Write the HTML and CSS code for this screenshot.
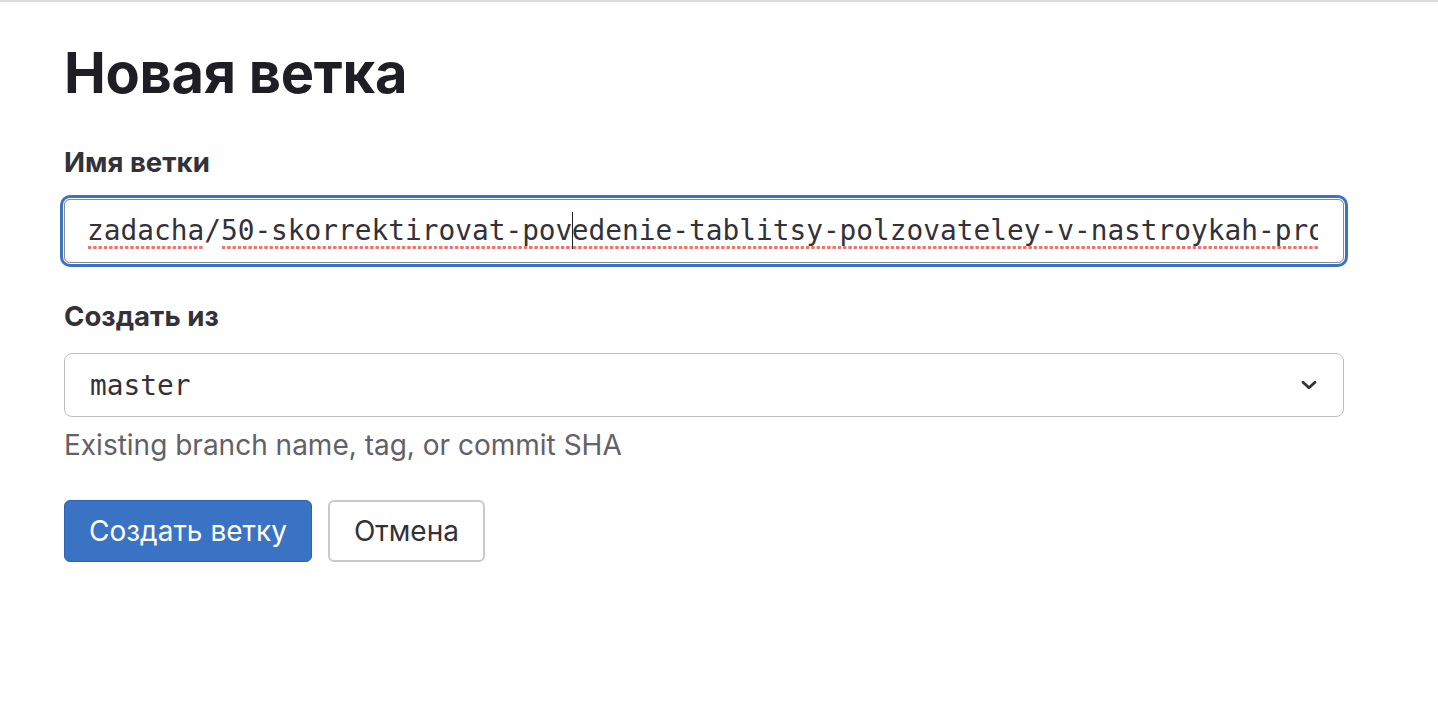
FILE: index.html
```html
<!DOCTYPE html>
<html lang="ru">
<head>
<meta charset="utf-8">
<title>Новая ветка</title>
<link rel="stylesheet" href="styles.css">
</head>
<body>
<div class="topline"></div>
<main class="page">
  <h1 class="title">Новая ветка</h1>
  <form class="form">
    <div class="group">
      <label class="label">Имя ветки</label>
      <div class="field field-focus">
        <div class="field-inner mono"><span class="sp">zadacha</span>/<span class="sp">50-skorrektirovat-pov</span><span class="caret"></span><span class="sp">edenie-tablitsy-polzovateley-v-nastroykah-proekta</span></div>
      </div>
    </div>
    <div class="group group-second">
      <label class="label">Создать из</label>
      <div class="select">
        <span class="mono">master</span>
        <svg class="chev" width="18" height="12" viewBox="0 0 18 12"><path d="M3 3.2 L9 8.8 L15 3.2" fill="none" stroke="#333238" stroke-width="2.8" stroke-linecap="round" stroke-linejoin="round"/></svg>
      </div>
      <p class="help">Existing branch name, tag, or commit SHA</p>
    </div>
    <div class="actions">
      <button type="button" class="btn btn-primary">Создать ветку</button>
      <button type="button" class="btn btn-default">Отмена</button>
    </div>
  </form>
</main>
</body>
</html>
```

FILE: styles.css
```css
html, body {
  margin: 0;
  padding: 0;
  background: #ffffff;
}
body {
  font-family: "Inter", "Noto Sans", sans-serif;
  color: #333238;
}
.topline {
  height: 2px;
  background: #dcdcde;
}
.page {
  padding: 37px 94px 0 64px;
}
.title {
  margin: 0;
  font-size: 56px;
  line-height: 68px;
  font-weight: 700;
  color: #1f1e24;
  letter-spacing: -0.3px;
}
.form {
  display: flex;
  flex-direction: column;
  margin-top: 38px;
}
.group {
  display: flex;
  flex-direction: column;
}
.group-second {
  margin-top: 36px;
}
.label {
  font-size: 27.6px;
  line-height: 34px;
  font-weight: 700;
  color: #333238;
  margin-bottom: 20px;
}
.mono {
  font-family: "DejaVu Sans Mono", "Liberation Mono", monospace;
  font-size: 27.8px;
  color: #333238;
}
.field {
  height: 64px;
  box-sizing: border-box;
  border: 1px solid #89888d;
  border-radius: 6px;
  display: flex;
  align-items: center;
  padding: 0 25px 0 22px;
  overflow: hidden;
}
.field-focus {
  box-shadow: 0 0 0 1px #ffffff, 0 0 0 4px #3a72c4;
}
.field-inner {
  white-space: nowrap;
  overflow: hidden;
  width: 100%;
  line-height: 40px;
}
.sp {
  padding-bottom: 3px;
  background-image: radial-gradient(circle at 2.6px 2.5px, #ef726e 1.6px, rgba(239, 114, 110, 0) 2px);
  background-size: 5.3px 5px;
  background-repeat: repeat-x;
  background-position: left bottom;
}
.caret {
  display: inline-block;
  width: 0;
  height: 37px;
  border-left: 1.5px solid #1f1e24;
  vertical-align: -9px;
  margin-right: -1.5px;
}
.select {
  height: 64px;
  box-sizing: border-box;
  border: 1px solid #bfbfc3;
  border-radius: 8px;
  display: flex;
  align-items: center;
  justify-content: space-between;
  padding: 0 25px 0 25px;
}
.chev {
  display: block;
}
.help {
  margin: 8px 0 0 0;
  font-size: 28px;
  line-height: 40px;
  color: #626168;
}
.actions {
  display: flex;
  gap: 16px;
  margin-top: 35px;
}
.btn {
  height: 62px;
  box-sizing: border-box;
  border-radius: 6px;
  font-family: "Inter", "Noto Sans", sans-serif;
  font-size: 28px;
  padding: 0 24px;
  cursor: pointer;
}
.btn-primary {
  background: #3a72c4;
  border: 1px solid #2f63b1;
  color: #ffffff;
}
.btn-default {
  background: #ffffff;
  border: 2px solid #c9c8cd;
  color: #333238;
}
```
